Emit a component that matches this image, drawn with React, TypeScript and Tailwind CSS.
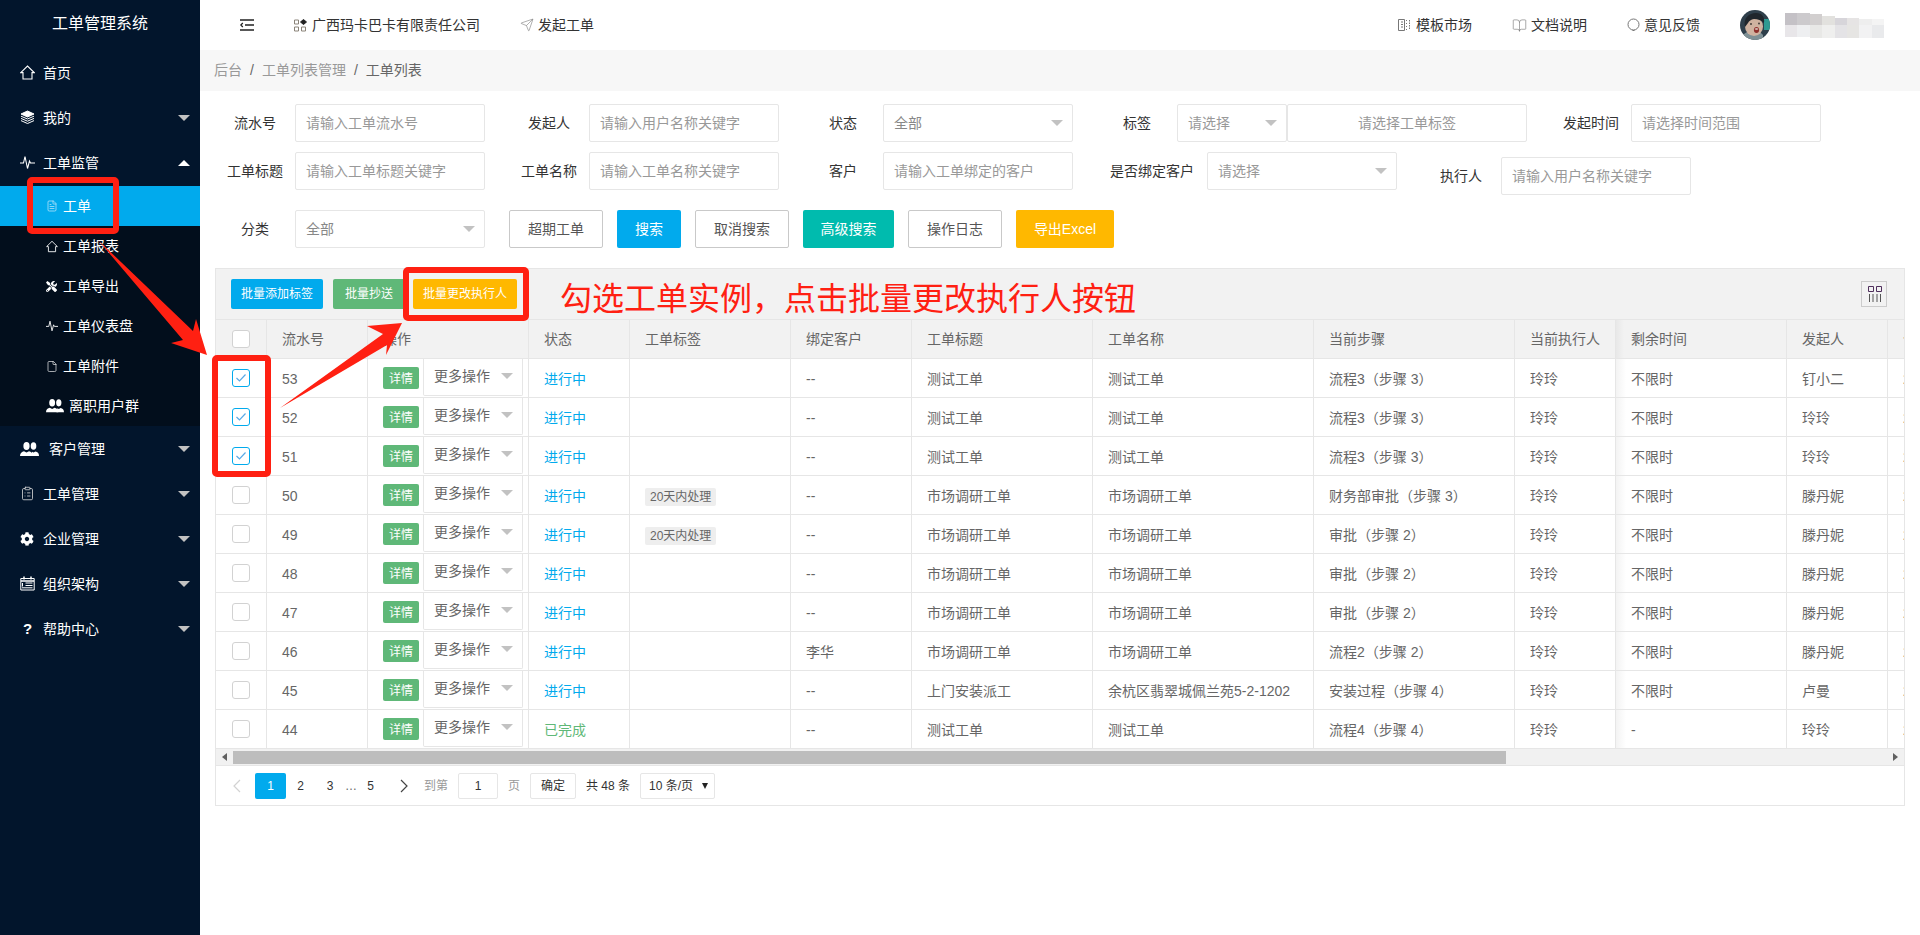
import React from "react";
import { Send, BookOpen, ClipboardList, File, FileText } from "lucide-react";
import { FaCog, FaTools } from "react-icons/fa";

const Tri = ({ up = false, className = "border-t-[#c2c2c2]" }: { up?: boolean; className?: string }) =>
  up ? (
    <span className="block w-0 h-0 border-x-[6px] border-x-transparent border-b-[6px] border-b-white" />
  ) : (
    <span className={`block w-0 h-0 border-x-[6px] border-x-transparent border-t-[6px] ${className}`} />
  );

const HomeIcon = ({ s = 15 }: { s?: number }) => (
  <svg width={s} height={s} viewBox="0 0 15 15" fill="none" stroke="#fff" strokeWidth="1.1">
    <path d="M.8 7.6 7.5 1l6.7 6.6H12v6.4H3V7.6Z" />
  </svg>
);
const Layers = () => (
  <svg width="15" height="15" viewBox="0 0 15 15" fill="none" stroke="#fff" strokeWidth="1">
    <path d="M7.5 1 14 4 7.5 7 1 4Z" fill="#fff" />
    <path d="M1 6.2 7.5 9 14 6.2M1 8.4l6.500 2.800 6.500-2.800M1 10.600l6.500 2.900 6.500-2.900" />
  </svg>
);
const Pulse = ({ s = 15 }: { s?: number }) => (
  <svg width={s} height={s} viewBox="0 0 15 15" fill="none" stroke="#fff" strokeWidth="1.1">
    <path d="M0 8h3.500l1.500-6.500L7.500 13.500 9.500 6l1 2H15" />
  </svg>
);
const People = ({ w = 19 }: { w?: number }) => (
  <svg width={w} height={(w * 14) / 19} viewBox="0 0 19 14" fill="#fff">
    <ellipse cx="13.500" cy="4" rx="2.800" ry="3.800" />
    <path d="M11 14h8c0-3-1.500-4-3.500-4.500L13.500 10.500 12 9.800Z" />
    <ellipse cx="6.500" cy="4" rx="3.100" ry="4" />
    <path d="M0 14c0-3 2-4.200 4-4.700l2.500 1.200 2.500-1.200c2 .5 4 1.700 4 4.700Z" />
  </svg>
);
const Org = () => (
  <svg width="15" height="15" viewBox="0 0 15 15" fill="none" stroke="#fff" strokeWidth="1">
    <path d="M.8 2.500h13.400v11.500H.8Z" />
    <path d="M4 .5v3M11 .5v3M1 5h13" strokeWidth="1.500" />
    <path d="M5.500 7h7M5.500 9.500h7M2.500 7v3.500M2 11.800h10.500" />
  </svg>
);
const Hamburger = () => (
  <svg width="14" height="12" viewBox="0 0 14 12" fill="none" stroke="#222" strokeWidth="1.300">
    <path d="M0 1h14M5 6h9M0 11h14M2.800 4 .8 6l2 2" />
  </svg>
);
const Company = () => (
  <svg width="13" height="13" viewBox="0 0 13 13" fill="none" stroke="#8a8378" strokeWidth="1">
    <path d="M.5 1h4v4h-4ZM.5 8h4v4h-4ZM7.500 8h4v4h-4Z" />
    <path d="M9.500.5 12.500 3 9.500 5.500 6.500 3Z" fill="#222" stroke="#222" />
  </svg>
);
const Market = () => (
  <svg width="13" height="14" viewBox="0 0 13 14" fill="none" stroke="#777" strokeWidth="1">
    <path d="M.5 1.500h6v11h-6ZM3 4h2M3 6.500h2M3 9h2" />
    <path d="M8.500 2v1M8.500 5v1M8.500 8v1M8.500 11v1M11.500 2v10" strokeDasharray="1.500 1" />
  </svg>
);
const Bubble = () => (
  <svg width="13" height="14" viewBox="0 0 13 14" fill="none" stroke="#777" strokeWidth="1">
    <circle cx="6.500" cy="6.500" r="5.500" />
    <path d="M5.500 12.500h2" />
  </svg>
);
const Avatar = () => (
  <svg width="30" height="30" viewBox="0 0 30 30" className="rounded-full shrink-0">
    <rect width="30" height="30" fill="#2f3f4b" />
    <rect x="24" y="9" width="6" height="11" fill="#2f9a92" />
    <path d="M4 30v-6l6-4h8l5 5v5Z" fill="#7f9095" />
    <ellipse cx="14" cy="16.500" rx="9" ry="9.500" fill="#cfb2a0" />
    <path d="M5 17C3 8 9 3 16 3c6 0 9 4 8 10-3-3-6-4-10-4-3 .5-5 2-6 4-1 1-2 3-3 4Z" fill="#20262c" />
    <ellipse cx="16.500" cy="20" rx="2.600" ry="3" fill="#8e2f2c" />
    <ellipse cx="16.500" cy="19" rx="1.800" ry=".8" fill="#e9dcd6" />
    <circle cx="11" cy="14" r=".9" fill="#3a3432" />
    <circle cx="19" cy="13.500" r=".9" fill="#3a3432" />
  </svg>
);
const ColumnsIcon = () => (
  <svg width="14" height="16" viewBox="0 0 14 16" fill="none" stroke="#4f2f5c" strokeWidth="1">
    <path d="M.5.5h5v5h-5ZM8.500.5h5v5h-5Z" />
    <path d="M1.500 8v8M5 8v8M9 8v8M12.500 8v8" stroke="#555" />
  </svg>
);

const Check = ({ on = false }: { on?: boolean }) => (
  <span
    className={`flex items-center justify-center w-[18px] h-[18px] rounded-[3px] bg-white border ${
      on ? "border-[#01aaed]" : "border-[#d2d2d2]"
    }`}
  >
    {on && (
      <svg width="12" height="10" viewBox="0 0 12 10" fill="none" stroke="#5aa9e6" strokeWidth="1.200">
        <path d="M1.500 5 4.500 8 10.500 1.500" />
      </svg>
    )}
  </span>
);

const MainItem = ({
  icon,
  label,
  arrow = false,
  open = false,
  iconW = "w-[15px]",
}: {
  icon: React.ReactNode;
  label: string;
  arrow?: boolean;
  open?: boolean;
  iconW?: string;
}) => (
  <div className="flex items-center h-[45px] pl-[20px] pr-[10px] text-white text-[14px]">
    <span className={`flex items-center justify-start ${iconW} mr-[8px]`}>{icon}</span>
    <span className="flex-1 leading-[20px]">{label}</span>
    {arrow && <Tri up={open} />}
  </div>
);

const SubItem = ({
  icon,
  label,
  active = false,
  iconW = "w-[12px]",
}: {
  icon: React.ReactNode;
  label: string;
  active?: boolean;
  iconW?: string;
}) => (
  <div className={`flex items-center h-[40px] pl-[46px] text-white text-[14px] ${active ? "bg-[#01aaed]" : ""}`}>
    <span className={`flex items-center ${iconW} mr-[5px]`}>{icon}</span>
    <span className="leading-[20px]">{label}</span>
  </div>
);

const Sidebar = () => (
  <aside className="w-[200px] h-[935px] shrink-0 bg-[#02152c]">
    <div className="h-[50px] flex items-center justify-center text-white text-[16px] pb-[2px]">工单管理系统</div>
    <MainItem icon={<HomeIcon />} label="首页" />
    <MainItem icon={<Layers />} label="我的" arrow />
    <MainItem icon={<Pulse />} label="工单监管" arrow open />
    <div className="h-px" />
    <div className="bg-[#020e1c]">
      <SubItem icon={<FileText size={12} color="#bfe6fa" strokeWidth={1.5} />} label="工单" active />
      <SubItem icon={<HomeIcon s={13} />} label="工单报表" />
      <SubItem icon={<FaTools size={11} color="#fff" />} label="工单导出" />
      <SubItem icon={<Pulse s={12} />} label="工单仪表盘" />
      <SubItem icon={<File size={13} color="#fff" strokeWidth={1.300} />} label="工单附件" />
      <SubItem icon={<People w={18} />} iconW="w-[18px]" label="离职用户群" />
    </div>
    <MainItem icon={<People />} iconW="w-[21px]" label="客户管理" arrow />
    <MainItem icon={<ClipboardList size={15} color="#d9d9d9" strokeWidth={1.300} />} label="工单管理" arrow />
    <MainItem icon={<FaCog size={14} color="#fff" />} label="企业管理" arrow />
    <MainItem icon={<Org />} label="组织架构" arrow />
    <MainItem icon={<span className="font-bold text-[15px] pl-[3px] leading-none">?</span>} label="帮助中心" arrow />
  </aside>
);

const mosaicTop = ["bg-[#c4c1c6]", "bg-[#cccacd]", "bg-[#d2cfcf] mt-[1px]", "bg-[#e2e1de] mt-[3px]", "bg-[#d7d5da] mt-[5px]", "bg-[#e6e4e4] mt-[5px]", "bg-[#eeeeee] mt-[6px]", "bg-[#f4f4f4] mt-[6px]"];
const mosaicBottom = ["bg-[#e8e6e9] mb-[1px]", "bg-[#eeeff1] mb-[1px]", "bg-[#e8e8e6]", "bg-[#efefee]", "bg-[#e4e3e6]", "bg-[#e6e5e3]", "bg-[#f2f2f3]", "bg-[#e9eaec]"];

const Header = () => (
  <header className="h-[50px] flex items-center bg-white text-[14px] text-[#333] pl-[40px] pr-[36px]">
    <Hamburger />
    <span className="ml-[40px]"><Company /></span>
    <span className="ml-[5px]">广西玛卡巴卡有限责任公司</span>
    <span className="ml-[40px]"><Send size={14} color="#777" strokeWidth={1} /></span>
    <span className="ml-[4px]">发起工单</span>
    <div className="ml-auto flex items-center">
      <Market />
      <span className="ml-[5px]">模板市场</span>
      <span className="ml-[40px]"><BookOpen size={15} color="#777" strokeWidth={1} /></span>
      <span className="ml-[4px]">文档说明</span>
      <span className="ml-[40px]"><Bubble /></span>
      <span className="ml-[4px]">意见反馈</span>
      <span className="ml-[40px]"><Avatar /></span>
      <div className="ml-[15px] w-[99px] h-[25px] grid grid-cols-8 grid-rows-2">
        {mosaicTop.map((c, i) => (
          <span key={"t" + i} className={c} />
        ))}
        {mosaicBottom.map((c, i) => (
          <span key={"b" + i} className={c} />
        ))}
      </div>
    </div>
  </header>
);

const Label = ({ children, w = "w-[80px]" }: { children: React.ReactNode; w?: string }) => (
  <label className={`${w} shrink-0 h-[38px] flex items-center justify-center text-[14px] text-[#333]`}>{children}</label>
);
const Input = ({ placeholder, w = "w-[190px]", center = false }: { placeholder: string; w?: string; center?: boolean }) => (
  <input
    placeholder={placeholder}
    className={`${w} h-[38px] shrink-0 border border-[#e6e6e6] rounded-[2px] px-[10px] text-[14px] outline-none placeholder:text-[#999] ${
      center ? "text-center" : ""
    }`}
  />
);
const Select = ({ value, w = "w-[190px]", muted = false }: { value: string; w?: string; muted?: boolean }) => (
  <div className={`${w} h-[38px] shrink-0 border border-[#e6e6e6] rounded-[2px] pl-[10px] pr-[9px] flex items-center justify-between text-[14px] ${muted ? "text-[#999]" : "text-[#888]"}`}>
    <span>{value}</span>
    <Tri />
  </div>
);
const Field = ({ label, children, w }: { label: string; children: React.ReactNode; w?: string }) => (
  <div className="flex">
    <Label w={w}>{label}</Label>
    {children}
  </div>
);

const Btn = ({ children, className }: { children: React.ReactNode; className: string }) => (
  <button className={`h-[38px] rounded-[2px] text-[14px] shrink-0 ${className}`}>{children}</button>
);

const Filters = () => (
  <div className="pt-[13px] pl-[15px]">
    <div className="flex gap-[24px] mb-[10px]">
      <Field label="流水号"><Input placeholder="请输入工单流水号" /></Field>
      <Field label="发起人"><Input placeholder="请输入用户名称关键字" /></Field>
      <Field label="状态"><Select value="全部" /></Field>
      <Field label="标签">
        <Select value="请选择" w="w-[110px]" muted />
        <Input placeholder="请选择工单标签" w="w-[240px]" center />
      </Field>
      <Field label="发起时间"><Input placeholder="请选择时间范围" /></Field>
    </div>
    <div className="flex gap-[24px] mb-[15px]">
      <Field label="工单标题"><Input placeholder="请输入工单标题关键字" /></Field>
      <Field label="工单名称"><Input placeholder="请输入工单名称关键字" /></Field>
      <Field label="客户"><Input placeholder="请输入工单绑定的客户" /></Field>
      <Field label="是否绑定客户" w="w-[110px]"><Select value="请选择" muted /></Field>
      <div className="mt-[5px]">
        <Field label="执行人"><Input placeholder="请输入用户名称关键字" /></Field>
      </div>
    </div>
    <div className="flex items-start">
      <Field label="分类"><Select value="全部" /></Field>
      <div className="flex gap-[14px] ml-[24px]">
        <Btn className="w-[94px] bg-white border border-[#c9c9c9] text-[#555]">超期工单</Btn>
        <Btn className="w-[64px] bg-[#01aaed] text-white">搜索</Btn>
        <Btn className="w-[94px] bg-white border border-[#c9c9c9] text-[#555]">取消搜索</Btn>
        <Btn className="w-[91px] bg-[#00bbae] text-white">高级搜索</Btn>
        <Btn className="w-[94px] bg-white border border-[#c9c9c9] text-[#555]">操作日志</Btn>
        <Btn className="w-[98px] bg-[#ffb800] text-white">导出Excel</Btn>
      </div>
    </div>
  </div>
);

type Row = { id: number; status?: string; tag?: boolean; client?: string; title: string; name: string; step: string; left?: string; from: string };
const rows: Row[] = [
  { id: 53, title: "测试工单", name: "测试工单", step: "流程3（步骤 3）", from: "钉小二" },
  { id: 52, title: "测试工单", name: "测试工单", step: "流程3（步骤 3）", from: "玲玲" },
  { id: 51, title: "测试工单", name: "测试工单", step: "流程3（步骤 3）", from: "玲玲" },
  { id: 50, tag: true, title: "市场调研工单", name: "市场调研工单", step: "财务部审批（步骤 3）", from: "滕丹妮" },
  { id: 49, tag: true, title: "市场调研工单", name: "市场调研工单", step: "审批（步骤 2）", from: "滕丹妮" },
  { id: 48, title: "市场调研工单", name: "市场调研工单", step: "审批（步骤 2）", from: "滕丹妮" },
  { id: 47, title: "市场调研工单", name: "市场调研工单", step: "审批（步骤 2）", from: "滕丹妮" },
  { id: 46, client: "李华", title: "市场调研工单", name: "市场调研工单", step: "流程2（步骤 2）", from: "滕丹妮" },
  { id: 45, title: "上门安装派工", name: "余杭区翡翠城佩兰苑5-2-1202", step: "安装过程（步骤 4）", from: "卢曼" },
  { id: 44, status: "已完成", title: "测试工单", name: "测试工单", step: "流程4（步骤 4）", left: "-", from: "玲玲" },
];

const widths = [51, 101, 161, 101, 161, 121, 181, 221, 201, 101, 171, 101, 200];
const heads = ["流水号", "操作", "状态", "工单标签", "绑定客户", "工单标题", "工单名称", "当前步骤", "当前执行人", "剩余时间", "发起人", "创建时间"];
const thc = "border-r border-b border-[#e6e6e6] px-[15px] whitespace-nowrap overflow-hidden text-left";
const tdc = "border-r border-b border-[#e6e6e6] px-[15px] pt-[2px] whitespace-nowrap overflow-hidden text-left";
const shade = "bg-[linear-gradient(90deg,#f3f3f3,#ffffff_10px)]";

const DataTable = () => (
  <table className="table-fixed border-separate border-spacing-0 w-[1872px] text-[14px] text-[#666]">
    <colgroup>
      {widths.map((w, i) => (
        <col key={i} style={{ width: w }} />
      ))}
    </colgroup>
    <thead>
      <tr className="h-[39px] bg-[#f2f2f2]">
        <th className="border-r border-b border-[#e6e6e6]">
          <span className="flex justify-center"><Check /></span>
        </th>
        {heads.map((h, i) => (
          <th key={h} className={`${thc} font-normal ${i === 9 ? "bg-[linear-gradient(90deg,#e8e8e8,#f2f2f2_8px)]" : ""}`}>
            {h}
          </th>
        ))}
      </tr>
    </thead>
    <tbody>
      {rows.map((r, idx) => (
        <tr key={r.id} className="h-[39px]">
          <td className="border-r border-b border-[#e6e6e6]">
            <span className="flex justify-center"><Check on={idx < 3} /></span>
          </td>
          <td className={tdc}>{r.id}</td>
          <td className="border-r border-b border-[#e6e6e6] pl-[15px] p-0 align-top">
            <div className="flex items-start h-[38px]">
              <span className="mt-[8px] w-[36px] h-[22px] pt-[2px] rounded-[2px] bg-[#5fb878] text-white text-[12px] flex items-center justify-center mr-[4px]">详情</span>
              <div className="w-[100px] h-[37px] border-x border-b border-[#e6e6e6] rounded-b-[2px] pl-[10px] pr-[9px] flex items-center justify-between pb-[2px]">
                <span>更多操作</span>
                <Tri />
              </div>
            </div>
          </td>
          <td className={`${tdc} ${r.status ? "text-[#5fb878]" : "text-[#01aaed]"}`}>{r.status ?? "进行中"}</td>
          <td className={tdc}>
            {r.tag && <span className="inline-block h-[18px] leading-[18px] px-[5px] bg-[#eeeeee] rounded-[2px] text-[12px] text-[#666]">20天内处理</span>}
          </td>
          <td className={tdc}>{r.client ?? "--"}</td>
          <td className={tdc}>{r.title}</td>
          <td className={tdc}>{r.name}</td>
          <td className={tdc}>{r.step}</td>
          <td className={tdc}>玲玲</td>
          <td className={`${tdc} ${shade}`}>{r.left ?? "不限时"}</td>
          <td className={tdc}>{r.from}</td>
          <td className={tdc}>2021-03-16 10:20:31</td>
        </tr>
      ))}
    </tbody>
  </table>
);

const Toolbar = () => (
  <div className="h-[52px] bg-[#f2f2f2] border-t border-b border-[#e6e6e6] flex items-center pl-[15px] pr-[17px]">
    <button className="w-[92px] h-[30px] rounded-[2px] bg-[#01aaed] text-white text-[12px]">批量添加标签</button>
    <button className="w-[72px] h-[30px] rounded-[2px] bg-[#5fb878] text-white text-[12px] ml-[10px]">批量抄送</button>
    <button className="w-[104px] h-[30px] rounded-[2px] bg-[#ffb800] text-white text-[12px] ml-[8px]">批量更改执行人</button>
    <span className="ml-auto w-[26px] h-[26px] border border-[#cccccc] flex items-center justify-center pl-[2px]"><ColumnsIcon /></span>
  </div>
);

const Scroll = () => (
  <div className="h-[17px] bg-[#f1f1f1] border-b border-[#e6e6e6] flex items-center">
    <span className="w-[17px] flex justify-center">
      <span className="block w-0 h-0 border-y-[4px] border-y-transparent border-r-[5px] border-r-[#606060]" />
    </span>
    <span className="block w-[1273px] h-[13px] bg-[#bdbdbd]" />
    <span className="ml-auto w-[17px] flex justify-center">
      <span className="block w-0 h-0 border-y-[4px] border-y-transparent border-l-[5px] border-l-[#606060]" />
    </span>
  </div>
);

const Pager = () => (
  <div className="h-[40px] border-b border-[#e6e6e6] flex items-center pl-[15px] text-[12px] text-[#333]">
    <span className="w-[24px] flex pl-[1px]">
      <svg width="9" height="14" viewBox="0 0 9 14" fill="none" stroke="#d2d2d2" strokeWidth="1.200"><path d="M8 1 2 7l6 6" /></svg>
    </span>
    <span className="w-[31px] h-[26px] bg-[#01aaed] rounded-[2px] text-white flex items-center justify-center">1</span>
    <span className="w-[29px] text-center">2</span>
    <span className="w-[30px] text-center">3</span>
    <span className="w-[11px] text-center text-[#666]">…</span>
    <span className="w-[29px] text-center">5</span>
    <span className="w-[39px] flex justify-center">
      <svg width="9" height="14" viewBox="0 0 9 14" fill="none" stroke="#444" strokeWidth="1.200"><path d="m1 1 6 6-6 6" /></svg>
    </span>
    <span className="text-[#999]">到第</span>
    <span className="ml-[10px] w-[40px] h-[26px] border border-[#e6e6e6] rounded-[2px] flex items-center justify-center">1</span>
    <span className="ml-[10px] text-[#999]">页</span>
    <span className="ml-[10px] w-[46px] h-[26px] border border-[#e6e6e6] rounded-[2px] flex items-center justify-center">确定</span>
    <span className="ml-[10px] w-[44px] whitespace-nowrap">共 48 条</span>
    <span className="ml-[10px] w-[75px] h-[26px] border border-[#e6e6e6] rounded-[2px] flex items-center justify-between pl-[8px] pr-[6px]">
      <span>10 条/页</span>
      <span className="block w-0 h-0 border-x-[3px] border-x-transparent border-t-[6px] border-t-[#222]" />
    </span>
  </div>
);

const Annotations = () => (
  <>
    <div className="absolute left-[27px] top-[177px] w-[92px] h-[57px] border-[6px] border-[#ff2012] rounded-[5px]" />
    <div className="absolute left-[403px] top-[267px] w-[126px] h-[54px] border-[6px] border-[#ff2012] rounded-[5px]" />
    <div className="absolute left-[212px] top-[355px] w-[59px] h-[122px] border-[6px] border-[#ff2012] rounded-[5px]" />
    <div className="absolute left-[560px] top-[281px] text-[32px] leading-[36px] text-[#ff2012] whitespace-nowrap">勾选工单实例，点击批量更改执行人按钮</div>
    <svg className="absolute left-0 top-0 pointer-events-none" width="500" height="500" viewBox="0 0 500 500" fill="#ff2012">
      <path d="M98 240 193 331 196 319 207 355 171 343 183 340Z" />
      <path d="M280 408 383 334 367 326 402 323 386 355 387 345Z" />
    </svg>
  </>
);

export default function App() {
  return (
    <div className="relative w-[1920px] h-[935px] overflow-hidden flex bg-white font-[Liberation_Sans,Noto_Sans_CJK_SC,sans-serif]">
      <Sidebar />
      <main className="flex-1 min-w-0">
        <Header />
        <div className="h-[41px] pb-[1px] bg-[#f7f7f7] flex items-center pl-[14px] text-[14px] text-[#999]">
          <span>后台</span>
          <span className="mx-[8px] text-[#666]">/</span>
          <span>工单列表管理</span>
          <span className="mx-[8px] text-[#666]">/</span>
          <span className="text-[#666]">工单列表</span>
        </div>
        <Filters />
        <section className="mx-[15px] mt-[20px] border-l border-r border-[#e6e6e6]">
          <Toolbar />
          <div className="overflow-hidden">
            <DataTable />
          </div>
          <Scroll />
          <Pager />
        </section>
      </main>
      <Annotations />
    </div>
  );
}
